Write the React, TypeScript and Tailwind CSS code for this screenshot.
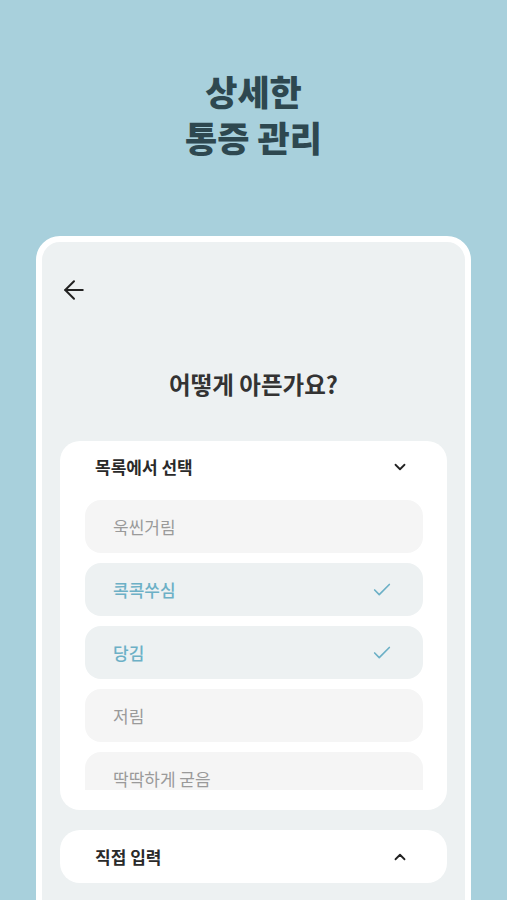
import { ArrowLeft, Check, ChevronDown, ChevronUp } from "lucide-react";

const font = { fontFamily: '"Noto Sans CJK KR", "Noto Sans", sans-serif' };

const items = [
  { label: "욱씬거림", selected: false },
  { label: "콕콕쑤심", selected: true },
  { label: "당김", selected: true },
  { label: "저림", selected: false },
  { label: "딱딱하게 굳음", selected: false },
];

export default function App() {
  return (
    <div
      className="flex h-[900px] w-full flex-col items-center overflow-hidden bg-[#a8d0dc]"
      style={font}
    >
      <h1 className="pt-[68px] text-center text-[35px] font-black leading-[46px] text-[#2e4850]">
        상세한
        <br />
        통증 관리
      </h1>

      <div className="mt-[76px] flex h-[700px] w-[435px] shrink-0 flex-col rounded-[24px] border-[6px] border-white bg-[#edf1f2] px-[18px]">
        <div className="pt-[33px]">
          <ArrowLeft className="-ml-[1px] h-[30px] w-[30px] text-[#222]" strokeWidth={1.6} />
        </div>

        <h2 className="mt-[63px] text-center text-[23.5px] font-bold leading-[32px] text-[#333]">
          어떻게 아픈가요?
        </h2>

        <div className="mt-[41px] rounded-[20px] bg-white pb-[20px]">
          <div className="flex h-[52px] items-center justify-between pl-[35px] pr-[38px]">
            <span className="text-[17px] font-semibold text-[#2a2a2a]">목록에서 선택</span>
            <ChevronDown className="h-[18px] w-[18px] text-[#222]" strokeWidth={2.4} />
          </div>
          <div className="mt-[7px] flex h-[290px] flex-col gap-[10px] overflow-hidden pl-[25px] pr-[24px]">
            {items.map((item) => (
              <div
                key={item.label}
                className={
                  item.selected
                    ? "flex h-[53px] shrink-0 items-center justify-between rounded-[16px] bg-[#edf1f2] pl-[28px] pr-[30px]"
                    : "flex h-[53px] shrink-0 items-center justify-between rounded-[16px] bg-[#f5f5f5] pl-[28px] pr-[30px]"
                }
              >
                <span
                  className={
                    item.selected
                      ? "text-[17px] font-medium text-[#6cb0c6]"
                      : "text-[17px] text-[#9a9a9a]"
                  }
                >
                  {item.label}
                </span>
                {item.selected && (
                  <Check className="h-[22px] w-[22px] text-[#6cb0c6]" strokeWidth={1.8} />
                )}
              </div>
            ))}
          </div>
        </div>

        <div className="mt-[20px] flex h-[53px] items-center justify-between rounded-[20px] bg-white pl-[35px] pr-[38px]">
          <span className="text-[17px] font-semibold text-[#2a2a2a]">직접 입력</span>
          <ChevronUp className="h-[18px] w-[18px] text-[#222]" strokeWidth={2.4} />
        </div>
      </div>
    </div>
  );
}
